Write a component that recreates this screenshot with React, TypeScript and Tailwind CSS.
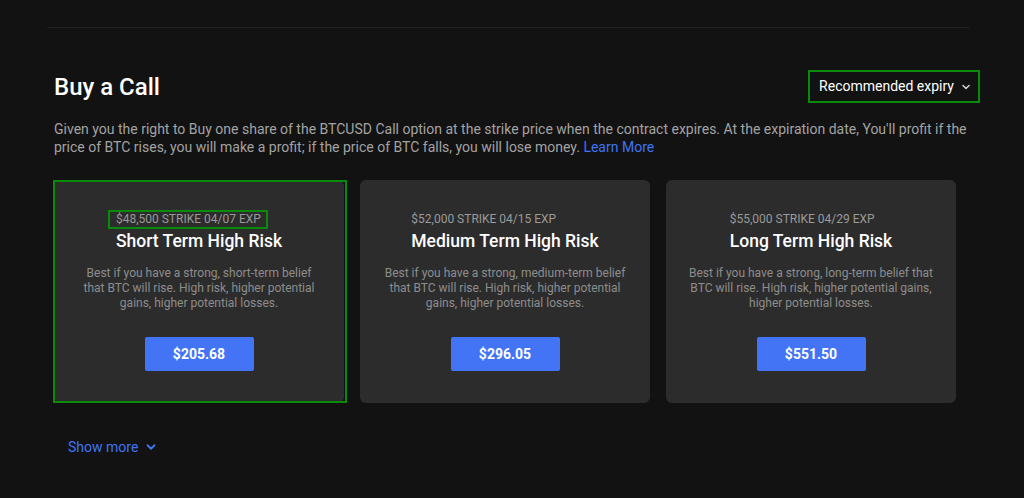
import React from "react";

const cards = [
  {
    strike: "$48,500 STRIKE 04/07 EXP",
    title: "Short Term High Risk",
    desc: "Best if you have a strong, short-term belief that BTC will rise. High risk, higher potential gains, higher potential losses.",
    price: "$205.68",
    selected: true,
  },
  {
    strike: "$52,000 STRIKE 04/15 EXP",
    title: "Medium Term High Risk",
    desc: "Best if you have a strong, medium-term belief that BTC will rise. High risk, higher potential gains, higher potential losses.",
    price: "$296.05",
    selected: false,
  },
  {
    strike: "$55,000 STRIKE 04/29 EXP",
    title: "Long Term High Risk",
    desc: "Best if you have a strong, long-term belief that BTC will rise. High risk, higher potential gains, higher potential losses.",
    price: "$551.50",
    selected: false,
  },
];

function Chevron({ className }: { className?: string }) {
  return (
    <svg viewBox="0 0 12 12" className={className} fill="none" stroke="currentColor" strokeWidth="1.6" strokeLinecap="round" strokeLinejoin="round">
      <path d="M3 4.5 L6 7.5 L9 4.5" />
    </svg>
  );
}

export default function App() {
  return (
    <div className="h-[498px] w-full overflow-hidden bg-[#121212]" style={{ fontFamily: "Roboto, 'Noto Sans', sans-serif" }}>
      <div className="ml-[47px] w-[923px] pt-[27px]">
        <div className="h-px bg-[#202020]" />
      </div>
      <section className="pl-[54px] pr-[44px]">
        <div className="mt-[42px] flex h-[33px] items-center justify-between">
          <h1 className="text-[24px] font-medium leading-none text-white">Buy a Call</h1>
          <button className="flex h-[33px] items-center gap-[6px] border-2 border-[#0a8a0a] pl-[9px] pr-[6px] text-[14px] text-white">
            <span>Recommended expiry</span>
            <Chevron className="h-[12px] w-[12px] text-[#cfcfcf]" />
          </button>
        </div>
        <p className="mt-[17px] w-[920px] text-[14px] leading-[18px] text-[#a3a3a3]">
          Given you the right to Buy one share of the BTCUSD Call option at the strike price when the contract expires. At the expiration date, You'll profit if the price of BTC rises, you will make a profit; if the price of BTC falls, you will lose money.{" "}
          <span className="text-[#3f74f5]">Learn More</span>
        </p>
        <div className="mt-[24px] flex gap-[16px]">
          {cards.map((c) => (
            <div key={c.price} className="relative flex h-[223px] w-[290px] flex-col items-center rounded-[6px] bg-[#2c2c2c] pt-[31px]">
              {c.selected && <div className="pointer-events-none absolute -left-[1px] -right-[3px] top-0 bottom-0 border-2 border-[#0a8a0a]" />}
              <div className="flex flex-col items-start">
                <div className="relative text-[12px] leading-[16px] text-[#9a9a9a]">
                  {c.strike}
                  {c.selected && <div className="absolute -left-[8px] -right-[7px] -top-[1px] -bottom-[2px] border-2 border-[#0a8a0a]" />}
                </div>
                <div className="mt-[2px] text-[17.5px] font-medium leading-[24px] text-white">{c.title}</div>
              </div>
              <p className="mt-[13px] w-[246px] text-center text-[12px] leading-[15px] text-[#8c8c8c]">{c.desc}</p>
              <button className="mt-[26px] flex h-[34px] w-[109px] items-center justify-center rounded-[2px] bg-[#4274f5] text-[14px] font-bold text-white">
                {c.price}
              </button>
            </div>
          ))}
        </div>
        <div className="mt-[34px] flex items-center gap-[6px] pl-[14px] text-[14px] leading-[20px] text-[#3f74f5]">
          <span>Show more</span>
          <Chevron className="h-[14px] w-[14px]" />
        </div>
      </section>
    </div>
  );
}
